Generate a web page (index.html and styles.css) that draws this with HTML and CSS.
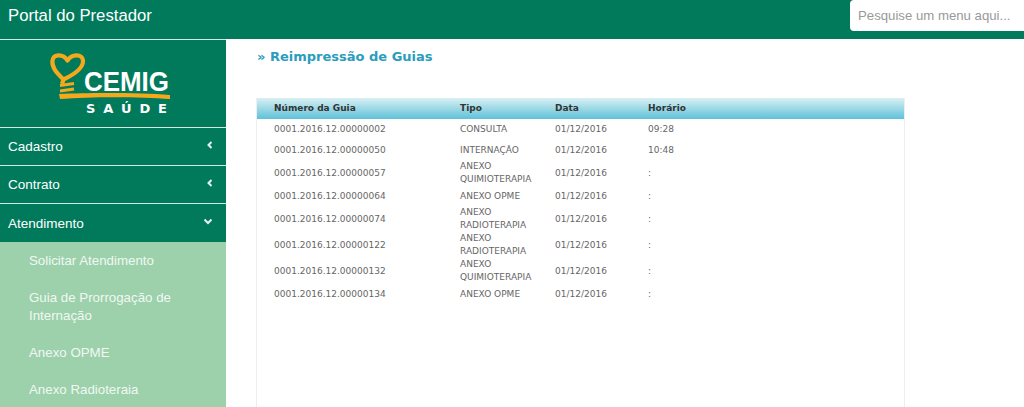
FILE: index.html
```html
<!DOCTYPE html>
<html lang="pt-BR">
<head>
  <meta charset="UTF-8">
  <meta name="viewport" content="width=device-width, initial-scale=1.0">
  <title>Portal do Prestador</title>
  <link rel="stylesheet" href="styles.css">
</head>
<body>
  <header class="topbar">
    <span class="brand">Portal do Prestador</span>
    <input class="search" type="text" placeholder="Pesquise um menu aqui...">
  </header>
  <div class="layout">
    <nav class="sidebar">
      <div class="logo">
        <svg width="140" height="70" viewBox="43 48 140 70">
          <path d="M63 79 C56 72 51.5 67 52.5 60.5 C53.5 54 63 53.5 67.5 60.5 C72 53.5 82.5 54 83 60.5 C83.5 68 73 75 63.5 79.5 L62 84" fill="none" stroke="#f5a81c" stroke-width="4.2" stroke-linejoin="round"/>
          <path d="M60 85.5 L74 83.5 M60 91 L74 89" fill="none" stroke="#f5a81c" stroke-width="3.2"/>
          <path d="M59 94 C90 92.5 140 92.5 170 95 L170 99 C140 96.5 90 96.5 60 99 Z" fill="#f5a81c"/>
          <text class="logo-name" x="84" y="91" textLength="85" lengthAdjust="spacingAndGlyphs">CEMIG</text>
          <text class="logo-sub" x="86" y="113" textLength="81">SAÚDE</text>
        </svg>
      </div>
      <a class="menu-item">Cadastro
        <svg class="chev" width="8" height="8" viewBox="0 0 8 8"><path d="M5.5 1 L2.5 4 L5.5 7" fill="none" stroke="#e6f2ee" stroke-width="2"/></svg>
      </a>
      <a class="menu-item">Contrato
        <svg class="chev" width="8" height="8" viewBox="0 0 8 8"><path d="M5.5 1 L2.5 4 L5.5 7" fill="none" stroke="#e6f2ee" stroke-width="2"/></svg>
      </a>
      <a class="menu-item open">Atendimento
        <svg class="chev" width="8" height="8" viewBox="0 0 8 8"><path d="M0.5 2.5 L4 6 L7.5 2.5" fill="none" stroke="#e6f2ee" stroke-width="2"/></svg>
      </a>
      <ul class="submenu">
        <li>Solicitar Atendimento</li>
        <li>Guia de Prorrogação de Internação</li>
        <li>Anexo OPME</li>
        <li>Anexo Radioteraia</li>
      </ul>
    </nav>
    <main class="content">
      <h1 class="title">» Reimpressão de Guias</h1>
      <div class="panel">
        <table class="guias">
          <colgroup>
            <col class="col-num"><col class="col-tipo"><col class="col-data"><col>
          </colgroup>
          <thead>
            <tr><th>Número da Guia</th><th>Tipo</th><th>Data</th><th>Horário</th></tr>
          </thead>
          <tbody>
            <tr><td>0001.2016.12.00000002</td><td>CONSULTA</td><td>01/12/2016</td><td>09:28</td></tr>
            <tr><td>0001.2016.12.00000050</td><td>INTERNAÇÃO</td><td>01/12/2016</td><td>10:48</td></tr>
            <tr><td>0001.2016.12.00000057</td><td>ANEXO QUIMIOTERAPIA</td><td>01/12/2016</td><td>:</td></tr>
            <tr><td>0001.2016.12.00000064</td><td>ANEXO OPME</td><td>01/12/2016</td><td>:</td></tr>
            <tr><td>0001.2016.12.00000074</td><td>ANEXO RADIOTERAPIA</td><td>01/12/2016</td><td>:</td></tr>
            <tr><td>0001.2016.12.00000122</td><td>ANEXO RADIOTERAPIA</td><td>01/12/2016</td><td>:</td></tr>
            <tr><td>0001.2016.12.00000132</td><td>ANEXO QUIMIOTERAPIA</td><td>01/12/2016</td><td>:</td></tr>
            <tr><td>0001.2016.12.00000134</td><td>ANEXO OPME</td><td>01/12/2016</td><td>:</td></tr>
          </tbody>
        </table>
      </div>
    </main>
  </div>
</body>
</html>
```

FILE: styles.css
```css
html, body {
  height: 100%;
}
body {
  margin: 0;
  overflow: hidden;
  background-color: #fff;
  font-family: "Liberation Sans", Arial, sans-serif;
  display: flex;
  flex-direction: column;
}
.topbar {
  flex: none;
  height: 39px;
  background-color: #017a5c;
  display: flex;
  justify-content: space-between;
  align-items: flex-start;
  padding-left: 8px;
  box-sizing: border-box;
}
.brand {
  color: #fff;
  font-size: 16.7px;
  line-height: 31px;
}
.search {
  width: 174px;
  height: 31px;
  box-sizing: border-box;
  border: 0;
  border-radius: 4px 0 0 4px;
  background-color: #fff;
  padding: 0 8px;
  font-family: "Liberation Sans", Arial, sans-serif;
  font-size: 13.2px;
}
.search::placeholder {
  color: #999;
  opacity: 1;
}
.layout {
  flex: 1;
  display: flex;
  min-height: 0;
}
.sidebar {
  flex: none;
  width: 226px;
  background-color: #9cd1ab;
  overflow: hidden;
}
.logo {
  background-color: #017a5c;
  border-top: 1px solid #d5e8e1;
  border-bottom: 1px solid #d5e8e1;
  padding-top: 8px;
  height: 79px;
}
.logo svg {
  display: block;
  margin: 0 auto;
}
.logo-name {
  font-family: "Liberation Sans", Arial, sans-serif;
  font-weight: bold;
  font-size: 28px;
  fill: #fff;
}
.logo-sub {
  font-family: "DejaVu Sans", sans-serif;
  font-weight: bold;
  font-size: 13px;
  fill: #fff;
}
.menu-item {
  display: flex;
  justify-content: space-between;
  align-items: center;
  height: 37px;
  padding: 0 12px 0 8px;
  background-color: #017a5c;
  border-bottom: 1px solid #d5e8e1;
  color: #fff;
  font-size: 13.5px;
}
.menu-item.open {
  border-bottom: 0;
  height: 38px;
  padding-right: 14px;
}
.chev {
  margin-top: -4px;
}
.submenu {
  list-style: none;
  margin: 0;
  padding: 0;
}
.submenu li {
  padding: 9.5px 20px 9.5px 29px;
  color: #f1f8f3;
  font-size: 13.3px;
  line-height: 18px;
}
.content {
  flex: 1;
  min-width: 0;
  padding-left: 30px;
}
.title {
  margin: 0;
  padding: 9px 0 0 1px;
  height: 50px;
  color: #2a9dbd;
  font-family: "DejaVu Sans", Verdana, sans-serif;
  font-size: 13px;
  font-weight: bold;
  line-height: 18px;
}
.panel {
  width: 647px;
  height: 320px;
  border-left: 1px solid #eee;
  border-right: 1px solid #eee;
}
.guias {
  width: 100%;
  table-layout: fixed;
  border-collapse: collapse;
  font-family: "DejaVu Sans", Verdana, sans-serif;
  font-size: 9px;
  line-height: 13px;
  color: #666;
}
.col-num {
  width: 186px;
}
.col-tipo {
  width: 95px;
}
.col-data {
  width: 93px;
}
.guias th {
  height: 21px;
  padding: 0 0 0 17px;
  text-align: left;
  font-weight: bold;
  color: #333;
  background: linear-gradient(to bottom, #d9f0f3, #5fc1d9);
}
.guias td {
  height: 20px;
  padding: 0 0 0 17px;
  vertical-align: middle;
}
.guias tbody tr:first-child td {
  height: 21px;
}
```
